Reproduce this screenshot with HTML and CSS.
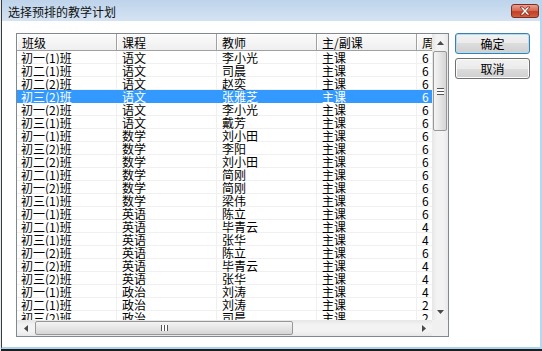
FILE: index.html
```html
<!DOCTYPE html>
<html lang="zh">
<head>
<meta charset="utf-8">
<title>选择预排的教学计划</title>
<link rel="stylesheet" href="styles.css">
</head>
<body>
<div class="window">
  <div class="titlebar">
    <span class="title">选择预排的教学计划</span>
    <span class="close">
      <svg width="14" height="10" viewBox="0 0 14 10"><path d="M2 1 L5 1 L7 3.5 L9 1 L12 1 L8.5 5 L12 9 L9 9 L7 6.5 L5 9 L2 9 L5.5 5 Z" fill="#fff" stroke="#7a2418" stroke-width="0.8"/></svg>
    </span>
  </div>
  <div class="client">
    <div class="listbox">
      <div class="view">
        <table class="grid">
          <colgroup><col class="c"><col class="c"><col class="c"><col class="c"><col class="c"></colgroup>
          <thead>
            <tr><th>班级</th><th>课程</th><th>教师</th><th>主/副课</th><th>周课时</th></tr>
          </thead>
          <tbody>
            <tr><td>初一(1)班</td><td>语文</td><td>李小光</td><td>主课</td><td>6</td></tr>
            <tr><td>初二(1)班</td><td>语文</td><td>司晨</td><td>主课</td><td>6</td></tr>
            <tr><td>初二(2)班</td><td>语文</td><td>赵奕</td><td>主课</td><td>6</td></tr>
            <tr class="sel"><td>初三(2)班</td><td>语文</td><td>张雅芝</td><td>主课</td><td>6</td></tr>
            <tr><td>初一(2)班</td><td>语文</td><td>李小光</td><td>主课</td><td>6</td></tr>
            <tr><td>初三(1)班</td><td>语文</td><td>戴芳</td><td>主课</td><td>6</td></tr>
            <tr><td>初一(1)班</td><td>数学</td><td>刘小田</td><td>主课</td><td>6</td></tr>
            <tr><td>初三(2)班</td><td>数学</td><td>李阳</td><td>主课</td><td>6</td></tr>
            <tr><td>初二(2)班</td><td>数学</td><td>刘小田</td><td>主课</td><td>6</td></tr>
            <tr><td>初二(1)班</td><td>数学</td><td>简刚</td><td>主课</td><td>6</td></tr>
            <tr><td>初一(2)班</td><td>数学</td><td>简刚</td><td>主课</td><td>6</td></tr>
            <tr><td>初三(1)班</td><td>数学</td><td>梁伟</td><td>主课</td><td>6</td></tr>
            <tr><td>初一(1)班</td><td>英语</td><td>陈立</td><td>主课</td><td>6</td></tr>
            <tr><td>初二(1)班</td><td>英语</td><td>毕青云</td><td>主课</td><td>4</td></tr>
            <tr><td>初三(1)班</td><td>英语</td><td>张华</td><td>主课</td><td>4</td></tr>
            <tr><td>初一(2)班</td><td>英语</td><td>陈立</td><td>主课</td><td>6</td></tr>
            <tr><td>初二(2)班</td><td>英语</td><td>毕青云</td><td>主课</td><td>4</td></tr>
            <tr><td>初三(2)班</td><td>英语</td><td>张华</td><td>主课</td><td>4</td></tr>
            <tr><td>初一(1)班</td><td>政治</td><td>刘涛</td><td>主课</td><td>4</td></tr>
            <tr><td>初二(1)班</td><td>政治</td><td>刘涛</td><td>主课</td><td>2</td></tr>
            <tr><td>初三(2)班</td><td>政治</td><td>司晨</td><td>主课</td><td>2</td></tr>
          </tbody>
        </table>
      </div>
      <div class="vscroll">
        <div class="sbtn"><svg width="7" height="4" viewBox="0 0 7 4"><path d="M0 4 L3.5 0 L7 4 Z" fill="#4a4a4a"/></svg></div>
        <div class="vtrack">
          <div class="vthumb"><span class="vgrip"></span></div>
        </div>
        <div class="sbtn"><svg width="7" height="4" viewBox="0 0 7 4"><path d="M0 0 L3.5 4 L7 0 Z" fill="#4a4a4a"/></svg></div>
      </div>
      <div class="hscroll">
        <div class="hbtn"><svg width="4" height="7" viewBox="0 0 4 7"><path d="M4 0 L0 3.5 L4 7 Z" fill="#4a4a4a"/></svg></div>
        <div class="htrack">
          <div class="hthumb"><span class="hgrip"></span></div>
        </div>
        <div class="hbtn"><svg width="4" height="7" viewBox="0 0 4 7"><path d="M0 0 L4 3.5 L0 7 Z" fill="#4a4a4a"/></svg></div>
      </div>
      <div class="corner"></div>
    </div>
    <div class="buttons">
      <button class="btn default">确定</button>
      <button class="btn">取消</button>
    </div>
  </div>
</div>
</body>
</html>
```
FILE: styles.css
```css
html, body {
  margin: 0;
  padding: 0;
}
body {
  width: 542px;
  height: 351px;
  box-sizing: border-box;
  border-left: 1px solid #e4ebf2;
  padding-bottom: 2px;
  background: #1e1e1e;
  overflow: hidden;
  font-family: "Noto Sans CJK SC", "Liberation Sans", sans-serif;
  font-size: 12px;
  color: #000;
}
.window {
  box-sizing: border-box;
  width: 541px;
  height: 349px;
  display: flex;
  flex-direction: column;
  background: #fff;
  border-left: 1px solid #3a3a3a;
  border-right: 2px solid #b3d8f2;
  border-bottom: 2px solid #a8d4f0;
}
.titlebar {
  height: 21px;
  flex: none;
  display: flex;
  align-items: flex-start;
  background: linear-gradient(#bed4eb, #d4e3f3);
}
.title {
  padding-left: 6px;
  padding-top: 5px;
  line-height: 14px;
  font-size: 12px;
  color: #111;
}
.close {
  margin-left: auto;
  margin-right: 1px;
  margin-top: 4px;
  width: 28px;
  height: 14px;
  box-sizing: border-box;
  border: 1px solid #7c2d22;
  border-radius: 3px;
  background: linear-gradient(#e9a08f, #d5654d 50%, #c23d24 55%, #d0603f);
  display: flex;
  align-items: center;
  justify-content: center;
}
.close svg { display: block; }
.client {
  flex: 1;
  display: flex;
  align-items: flex-start;
  padding: 12px 0 0 14px;
  gap: 6px;
}
.listbox {
  box-sizing: border-box;
  width: 433px;
  height: 304px;
  border: 1px solid #828790;
  display: grid;
  grid-template-columns: 415px 16px;
  grid-template-rows: 286px 16px;
  background: #fff;
}
.view {
  overflow: hidden;
}
.grid {
  border-collapse: collapse;
  border-spacing: 0;
  table-layout: fixed;
  width: 500px;
}
.grid col.c { width: 100px; }
.grid th {
  height: 17px;
  box-sizing: border-box;
  padding: 0 0 0 5px;
  text-align: left;
  font-weight: normal;
  line-height: 17px;
  white-space: nowrap;
  overflow: hidden;
  background: linear-gradient(#fbfbfb, #eeeeee);
  box-shadow: inset -1px -1px 0 #a0a0a0, inset 1px 1px 0 #fff;
}
.grid td {
  height: 13px;
  box-sizing: border-box;
  padding: 0 0 0 5px;
  line-height: 13px;
  white-space: nowrap;
  overflow: hidden;
  box-shadow: inset -1px -1px 0 #f0f0f0;
}
.grid td:first-child { padding-left: 4px; }
.grid tr.sel td {
  background: #3399ff;
  color: #fff;
  box-shadow: none;
}
.vscroll {
  display: flex;
  flex-direction: column;
  background: linear-gradient(90deg, #e6e6e6, #f3f3f3 30%, #f3f3f3 70%, #e8e8e8);
}
.sbtn {
  height: 17px;
  flex: none;
  display: flex;
  align-items: center;
  justify-content: center;
}
.sbtn svg, .hbtn svg { display: block; }
.vtrack {
  flex: 1;
  padding-left: 1px;
  padding-right: 1px;
}
.vthumb {
  height: 80px;
  box-sizing: border-box;
  border: 1px solid #979797;
  border-radius: 2px;
  background: linear-gradient(90deg, #f4f4f4, #e6e6e6 50%, #d5d5d5);
  display: flex;
  align-items: center;
  justify-content: center;
}
.vgrip {
  width: 7px;
  height: 5px;
  border-top: 1px solid #555;
  border-bottom: 1px solid #555;
  background: linear-gradient(#fff 0 2px, #555 2px 3px, #fff 3px);
}
.hscroll {
  display: flex;
  background: linear-gradient(#e6e6e6, #f3f3f3 30%, #f3f3f3 70%, #e8e8e8);
}
.hbtn {
  width: 17px;
  flex: none;
  display: flex;
  align-items: center;
  justify-content: center;
}
.htrack {
  flex: 1;
  padding-top: 1px;
  padding-bottom: 1px;
}
.hthumb {
  margin-left: 1px;
  width: 258px;
  height: 100%;
  box-sizing: border-box;
  border: 1px solid #979797;
  border-radius: 2px;
  background: linear-gradient(#f4f4f4, #e6e6e6 50%, #d5d5d5);
  display: flex;
  align-items: center;
  justify-content: center;
}
.hgrip {
  width: 5px;
  height: 6px;
  border-left: 1px solid #555;
  border-right: 1px solid #555;
  background: linear-gradient(90deg, #fff 0 2px, #555 2px 3px, #fff 3px);
}
.corner {
  background: #f0f0f0;
}
.buttons {
  display: flex;
  flex-direction: column;
  gap: 4px;
}
.btn {
  width: 75px;
  height: 21px;
  box-sizing: border-box;
  margin: 0;
  padding: 0;
  border: 1px solid #707070;
  border-radius: 3px;
  background: linear-gradient(#f2f2f2, #ebebeb 50%, #dddddd 50%, #cfcfcf);
  box-shadow: inset 0 0 0 1px #fcfcfc;
  font-family: "Noto Sans CJK SC", "Liberation Sans", sans-serif;
  font-size: 12px;
  line-height: 12px;
  color: #000;
}
.btn.default {
  border-color: #3c7fb1;
  box-shadow: inset 0 0 0 1px #b6dcf0;
}
```
